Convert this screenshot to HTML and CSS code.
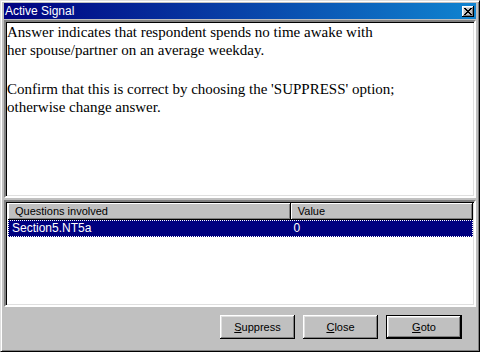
FILE: index.html
```html
<!DOCTYPE html>
<html>

<head>
    <meta charset="UTF-8">
    <title>Active Signal</title>
    <link rel="stylesheet" href="styles.css">
</head>

<body>
    <div class="window">
        <div class="titlebar">
            <span class="title">Active Signal</span>
            <button class="close-btn" aria-label="Close">
                <svg width="8" height="7" viewBox="0 0 8 7">
                    <path d="M0 0h2v1h1v1h2V1h1V0h2v1H7v1H6v1H5v1h1v1h1v1h1v1H6V6H5V5H3v1H2v1H0V6h1V5h1V4h1V3H2V2H1V1H0z" fill="#000"/>
                </svg>
            </button>
        </div>

        <div class="pane message">
            <p>Answer indicates that respondent spends no time awake with<br>her spouse/partner on an average weekday.</p>
            <p>Confirm that this is correct by choosing the 'SUPPRESS' option;<br>otherwise change answer.</p>
        </div>

        <div class="pane list">
            <div class="list-head">
                <div class="col col-question">Questions involved</div>
                <div class="col col-value">Value</div>
            </div>
            <div class="list-row selected">
                <div class="cell col-question">Section5.NT5a</div>
                <div class="cell col-value">0</div>
            </div>
        </div>

        <div class="actions">
            <button class="btn"><u>S</u>uppress</button>
            <button class="btn"><u>C</u>lose</button>
            <button class="btn default"><u>G</u>oto</button>
        </div>
    </div>
</body>

</html>
```

FILE: styles.css
```css
* {
    box-sizing: border-box;
}

body {
    margin: 0;
    font-family: 'Liberation Sans', Arial, sans-serif;
    font-size: 11px;
    color: #000;
}

.window {
    width: 480px;
    height: 352px;
    display: flex;
    flex-direction: column;
    background: #c0c0c0;
    border: 1px solid;
    border-color: #dfdfdf #000 #000 #dfdfdf;
    box-shadow: inset 1px 1px #fff, inset -1px -1px #808080;
    padding: 2px 3px 3px;
}

.titlebar {
    flex: none;
    height: 16px;
    margin-bottom: 1px;
    padding: 0 2px 0 1px;
    display: flex;
    align-items: center;
    justify-content: space-between;
    background: linear-gradient(to right, #000080, #1084d0);
    color: #fff;
}

.title {
    font-size: 12px;
    line-height: 16px;
}

.close-btn {
    width: 12px;
    height: 11px;
    padding: 0;
    border: none;
    display: flex;
    align-items: center;
    justify-content: center;
    background: #c0c0c0;
    box-shadow: inset -1px -1px #000, inset 1px 1px #fff, inset -2px -2px #808080, inset 2px 2px #dfdfdf;
}

.pane {
    flex: none;
    background: #fff;
    border: 2px solid;
    border-color: #808080 #fff #fff #808080;
    box-shadow: inset 1px 1px #000, inset -1px -1px #dfdfdf;
}

.message {
    height: 178px;
    padding: 1px 1px;
    font-family: 'Liberation Serif', 'Times New Roman', serif;
    font-size: 15px;
    line-height: 18px;
}

.message p {
    margin: 0 0 21px;
}

.list {
    height: 107px;
    margin-top: 2px;
    padding: 1px 1px 1px 2px;
}

.list-head {
    display: flex;
    height: 17px;
    background: #c0c0c0;
}

.col {
    line-height: 15px;
    padding: 1px 0 0 7px;
    background: #c0c0c0;
    box-shadow: inset -1px -1px #000, inset 1px 1px #fff, inset -2px -2px #808080;
}

.col-question {
    width: 284px;
}

.col-value {
    width: 183px;
}

.list-row {
    display: flex;
    height: 17px;
}

.list-row.selected {
    background: #000080;
    color: #fff;
    border: 1px dotted #fff;
}

.cell {
    font-size: 12px;
    line-height: 15px;
}

.cell.col-question {
    padding-left: 3px;
}

.cell.col-value {
    padding-left: 3px;
}

.actions {
    flex: 1;
    display: flex;
    justify-content: flex-end;
    align-items: flex-start;
    gap: 8px;
    padding: 8px 14px 0 0;
}

.btn {
    width: 75px;
    height: 24px;
    padding: 0;
    border: none;
    background: #c0c0c0;
    font-family: 'Liberation Sans', Arial, sans-serif;
    font-size: 11px;
    color: #000;
    box-shadow: inset -1px -1px #000, inset 1px 1px #fff, inset -2px -2px #808080, inset 2px 2px #dfdfdf;
}

.btn.default {
    width: 76px;
    border: 1px solid #000;
}
```
